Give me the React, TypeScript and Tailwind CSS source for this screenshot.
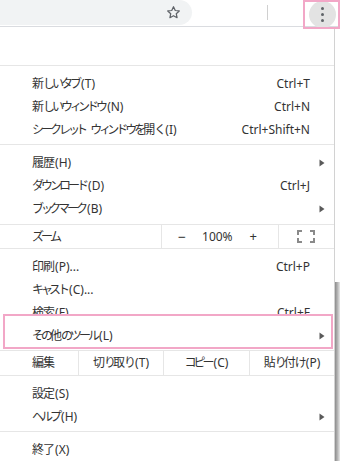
import React from "react";

const font = "font-['Noto_Sans','Noto_Sans_CJK_JP',sans-serif]";

// Narrow the full-width kana to get closer to the compact UI font of the original
const SMALL_KANA = "ッィャュョァゥェォっぃゃゅょ";
const isKana = (ch: string) => /[\u3040-\u30ff]/.test(ch);
const isKanji = (ch: string) => /[\u4e00-\u9fff]/.test(ch);

function charClass(ch: string, next?: string) {
  const beforeLatin = !next || !(isKana(next) || isKanji(next));
  if (isKana(ch)) {
    if (beforeLatin) return "tracking-[-1px]";
    if (SMALL_KANA.includes(ch)) return "tracking-[-4px]";
    return "tracking-[-3px]";
  }
  if (isKanji(ch) && !beforeLatin) return "tracking-[-1px]";
  return "";
}

function JP({ text }: { text: string }) {
  const chars = Array.from(text);
  return (
    <span className="whitespace-nowrap">
      {chars.map((ch, i) => (
        <span key={i} className={charClass(ch, chars[i + 1])}>
          {ch}
        </span>
      ))}
    </span>
  );
}

function Arrow() {
  return (
    <svg width="6" height="8" viewBox="0 0 6 8" className="ml-auto mr-[9px]">
      <path d="M0.5 0.5 L5.5 4 L0.5 7.5 Z" fill="#5a5a5a" />
    </svg>
  );
}

function Item({ label, shortcut, sub }: { label: string; shortcut?: string; sub?: boolean }) {
  return (
    <div className="relative flex h-[23px] items-center pl-[32px]">
      <JP text={label} />
      {shortcut && <span className="ml-auto mr-[24px]">{shortcut}</span>}
      {sub && <Arrow />}
    </div>
  );
}

function Sep() {
  return <div className="h-px bg-[#e6e6e6]" />;
}

export default function App() {
  return (
    <div className={`w-[340px] h-[462px] overflow-hidden bg-white text-[12px] text-[#333333] ${font}`}>
      {/* toolbar */}
      <div className="relative flex h-[27px] items-start border-b border-[#dadce0]">
        <div className="flex h-[25px] w-[192px] items-center justify-end rounded-r-full bg-[#f1f3f4] pr-[11px]">
          <svg width="15" height="15" viewBox="0 0 24 24" fill="none" stroke="#5f6368" strokeWidth="2" strokeLinejoin="round">
            <path d="M12 2.8l2.8 6 6.4.7-4.8 4.4 1.3 6.4L12 17.1l-5.7 3.2 1.3-6.4-4.8-4.4 6.4-.7z" />
          </svg>
        </div>
        <div className="ml-[75px] mt-[5px] h-[15px] w-px bg-[#d0d0d0]" />
        <div className="ml-auto mr-[4px] mt-[1px] flex h-[27px] w-[27px] flex-col items-center justify-center gap-[3px] rounded-full bg-[#e3e3e3]">
          <span className="h-[3px] w-[3px] rounded-full bg-[#5f6368]" />
          <span className="h-[3px] w-[3px] rounded-full bg-[#5f6368]" />
          <span className="h-[3px] w-[3px] rounded-full bg-[#5f6368]" />
        </div>
        <div className="absolute right-0 top-0 h-[29px] w-[37px] border-2 border-[#f2a7c7]" />
      </div>

      <div className="flex">
        {/* menu */}
        <div className="w-[335px] border-r border-[#d2d2d2]">
          <div className="h-[38px]" />
          <Sep />
          <div className="pt-[6px] pb-[3px]">
            <Item label="新しいタブ(T)" shortcut="Ctrl+T" />
            <Item label="新しいウィンドウ(N)" shortcut="Ctrl+N" />
            <Item label="シークレット ウィンドウを開く(I)" shortcut="Ctrl+Shift+N" />
          </div>
          <Sep />
          <div className="pt-[6px] pb-[4px]">
            <Item label="履歴(H)" sub />
            <Item label="ダウンロード(D)" shortcut="Ctrl+J" />
            <Item label="ブックマーク(B)" sub />
          </div>
          <Sep />
          <div className="flex h-[23px] items-center">
            <div className="flex h-full w-[161px] items-center pl-[32px]">
              <JP text="ズーム" />
            </div>
            <div className="flex h-full w-[118px] items-center border-x border-[#e6e6e6]">
              <span className="ml-[16px] text-[14px] leading-none">−</span>
              <span className="ml-[16px]">100%</span>
              <span className="ml-[17px] text-[13px] leading-none">+</span>
            </div>
            <div className="flex flex-1 items-center justify-center pr-[2px]">
              <svg width="18" height="13" viewBox="0 0 18 13" fill="none" stroke="#8a8a8a" strokeWidth="2">
                <path d="M1 5V1h4M13 1h4v4M17 8v4h-4M5 12H1V8" />
              </svg>
            </div>
          </div>
          <Sep />
          <div className="relative pt-[6px] pb-[3px]">
            <Item label="印刷(P)..." shortcut="Ctrl+P" />
            <Item label="キャスト(C)..." />
            <Item label="検索(F)" shortcut="Ctrl+F" />
            <div className="absolute left-[3px] top-[65px] h-[35px] w-[330px] border-2 border-[#f2a7c7] bg-white" />
            <Item label="その他のツール(L)" sub />
          </div>
          <Sep />
          <div className="flex h-[24px] items-center">
            <div className="flex h-full w-[78px] items-center pl-[32px]">
              <JP text="編集" />
            </div>
            <div className="flex h-full w-[85px] items-center justify-center border-l border-[#e6e6e6]">
              <JP text="切り取り(T)" />
            </div>
            <div className="flex h-full w-[86px] items-center justify-center border-l border-[#e6e6e6]">
              <JP text="コピー(C)" />
            </div>
            <div className="flex h-full flex-1 items-center justify-center border-l border-[#e6e6e6]">
              <JP text="貼り付け(P)" />
            </div>
          </div>
          <Sep />
          <div className="pt-[6px] pb-[3px]">
            <Item label="設定(S)" />
            <Item label="ヘルプ(H)" sub />
          </div>
          <Sep />
          <div className="pt-[6px]">
            <Item label="終了(X)" />
          </div>
        </div>
        {/* scroll shadow */}
        <div className="flex w-[5px] flex-col">
          <div className="h-[255px]" />
          <div className="flex-1 bg-gradient-to-r from-[#8c8c8c] via-[#b5b5b5] to-[#e8e8e8]" />
        </div>
      </div>
    </div>
  );
}
